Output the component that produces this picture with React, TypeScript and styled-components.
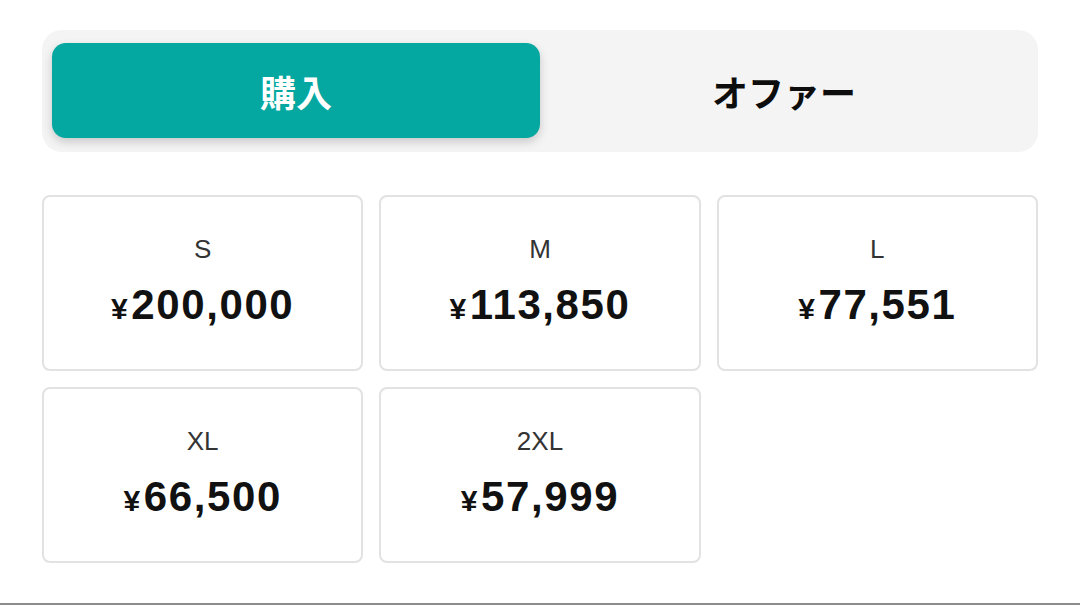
import React from 'react'
import styled, { createGlobalStyle } from 'styled-components'

const GlobalStyle = createGlobalStyle`
  html, body {
    margin: 0;
    padding: 0;
    background: #ffffff;
  }
  body {
    font-family: "Liberation Sans", "Noto Sans CJK JP", sans-serif;
  }
`

type Size = {
  label: string
  price: number
}

const sizes: Size[] = [
  { label: 'S', price: 200000 },
  { label: 'M', price: 113850 },
  { label: 'L', price: 77551 },
  { label: 'XL', price: 66500 },
  { label: '2XL', price: 57999 },
]

export default function App() {
  return (
    <Page>
      <GlobalStyle />
      <Tabs>
        <Tab active>購入</Tab>
        <Tab>オファー</Tab>
      </Tabs>
      <Grid>
        {sizes.map((s) => (
          <Card key={s.label}>
            <SizeLabel>{s.label}</SizeLabel>
            <Price>
              <Yen>¥</Yen>
              {s.price.toLocaleString('en-US')}
            </Price>
          </Card>
        ))}
      </Grid>
    </Page>
  )
}

const Page = styled.div`
  box-sizing: border-box;
  height: 605px;
  padding: 30px 42px 0 42px;
  border-bottom: 2px solid #8c8c8c;
  overflow: hidden;
`

const Tabs = styled.div`
  display: grid;
  grid-template-columns: 1fr 1fr;
  padding: 13px 10px 14px 10px;
  background: #f4f4f4;
  border-radius: 20px;
`

const Tab = styled.div<{ active?: boolean }>`
  height: 95px;
  display: flex;
  align-items: center;
  justify-content: center;
  border-radius: 14px;
  font-family: "Noto Sans CJK JP", sans-serif;
  font-weight: 700;
  font-size: 36px;
  color: ${(p) => (p.active ? '#ffffff' : '#0d0d0d')};
  background: ${(p) => (p.active ? '#05a8a0' : 'transparent')};
  box-shadow: ${(p) => (p.active ? '0 4px 10px rgba(0, 0, 0, 0.18)' : 'none')};
`

const Grid = styled.div`
  margin-top: 43px;
  display: grid;
  grid-template-columns: repeat(3, 1fr);
  gap: 16px;
`

const Card = styled.div`
  box-sizing: border-box;
  height: 176px;
  border: 2px solid #e2e2e2;
  border-radius: 8px;
  display: flex;
  flex-direction: column;
  align-items: center;
  justify-content: center;
  gap: 19px;
  padding-bottom: 1px;
`

const SizeLabel = styled.div`
  font-family: "Liberation Sans", sans-serif;
  font-size: 26px;
  color: #333333;
  line-height: 30px;
`

const Price = styled.div`
  font-family: "Liberation Sans", sans-serif;
  font-weight: 700;
  font-size: 42px;
  letter-spacing: 1.6px;
  color: #111111;
  line-height: 44px;
`

const Yen = styled.span`
  font-size: 30px;
  margin-right: 2px;
`
